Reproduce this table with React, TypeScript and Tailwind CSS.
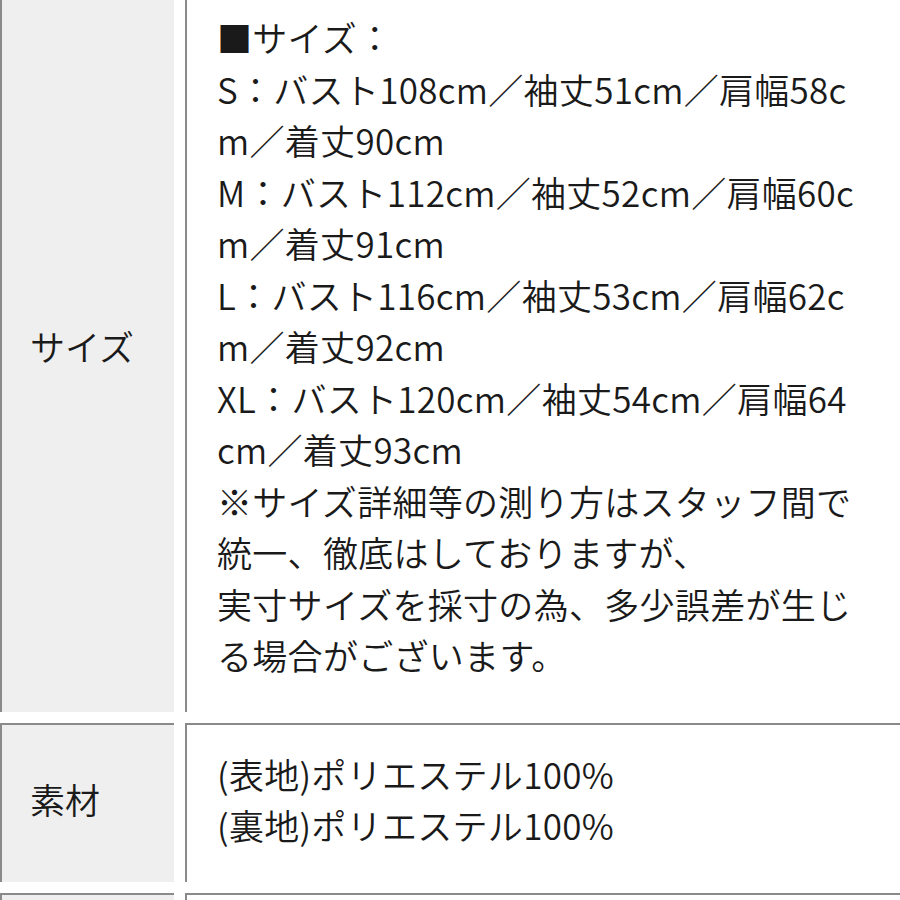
import React from "react";

const sizeLines = [
  "■サイズ：",
  "S：バスト108cm／袖丈51cm／肩幅58c",
  "m／着丈90cm",
  "M：バスト112cm／袖丈52cm／肩幅60c",
  "m／着丈91cm",
  "L：バスト116cm／袖丈53cm／肩幅62c",
  "m／着丈92cm",
  "XL：バスト120cm／袖丈54cm／肩幅64",
  "cm／着丈93cm",
  "※サイズ詳細等の測り方はスタッフ間で",
  "統一、徹底はしておりますが、",
  "実寸サイズを採寸の為、多少誤差が生じ",
  "る場合がございます。",
];

const materialLines = ["(表地)ポリエステル100%", "(裏地)ポリエステル100%"];

function Row({ label, lines }: { label: string; lines: string[] }) {
  return (
    <>
      <div className="flex items-center border-t-2 border-l-2 border-[#8a8a8a] bg-[#efefef] pl-[28px] pb-[8px]">
        <span>{label}</span>
      </div>
      <div className="border-t-2 border-l-2 border-[#8a8a8a] bg-white pl-[30px] pt-[23px] pb-[31px]">
        {lines.map((l, i) => (
          <div key={i} className="whitespace-nowrap tracking-[0.3px]">{l}</div>
        ))}
      </div>
    </>
  );
}

export default function App() {
  return (
    <div className="h-[900px] w-[900px] overflow-hidden bg-white">
      <div
        className="-mt-[14px] grid grid-cols-[174px_1fr] gap-x-[11px] gap-y-[11px] text-[35px] font-[350] leading-[51.5px] text-[#1a1a1a]"
        style={{ fontFamily: '"Noto Sans CJK JP", "Noto Sans", sans-serif' }}
      >
        <Row label="サイズ" lines={sizeLines} />
        <Row label="素材" lines={materialLines} />
        <div className="h-[60px] border-t-2 border-l-2 border-[#8a8a8a] bg-[#efefef]" />
        <div className="h-[60px] border-t-2 border-l-2 border-[#8a8a8a] bg-white" />
      </div>
    </div>
  );
}
